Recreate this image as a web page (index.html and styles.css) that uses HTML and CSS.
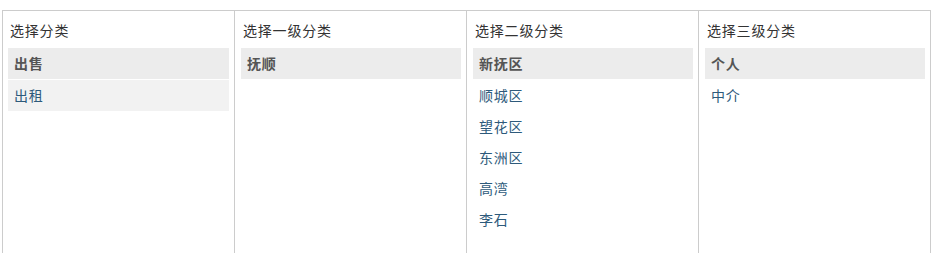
FILE: index.html
```html
<!DOCTYPE html>
<html lang="zh-CN">
<head>
<meta charset="utf-8">
<title>选择分类</title>
<link rel="stylesheet" href="styles.css">
</head>
<body>
<div class="picker">
  <div class="col">
    <div class="col-title">选择分类</div>
    <ul class="list">
      <li class="item active">出售</li>
      <li class="item shaded"><a href="#">出租</a></li>
    </ul>
  </div>
  <div class="col">
    <div class="col-title">选择一级分类</div>
    <ul class="list">
      <li class="item active">抚顺</li>
    </ul>
  </div>
  <div class="col">
    <div class="col-title">选择二级分类</div>
    <ul class="list">
      <li class="item active">新抚区</li>
      <li class="item"><a href="#">顺城区</a></li>
      <li class="item"><a href="#">望花区</a></li>
      <li class="item"><a href="#">东洲区</a></li>
      <li class="item"><a href="#">高湾</a></li>
      <li class="item"><a href="#">李石</a></li>
    </ul>
  </div>
  <div class="col">
    <div class="col-title">选择三级分类</div>
    <ul class="list">
      <li class="item active">个人</li>
      <li class="item"><a href="#">中介</a></li>
    </ul>
  </div>
</div>
</body>
</html>
```
FILE: styles.css
```css
html, body {
  margin: 0;
  padding: 0;
  background: #fff;
}
body {
  font-family: "Noto Sans CJK SC", "Liberation Sans", sans-serif;
  font-size: 14px;
  color: #333;
}
.picker {
  margin: 10px 0 0 2px;
  width: 929px;
  height: 243px;
  box-sizing: border-box;
  border: 1px solid #ccc;
  border-bottom: none;
  display: grid;
  grid-template-columns: 231px 232px 232px 232px;
  overflow: hidden;
}
.col {
  padding: 8px 5px 0 5px;
  box-sizing: border-box;
}
.col + .col {
  border-left: 1px solid #ccc;
  padding-left: 6px;
}
.col-title {
  line-height: 22px;
  height: 22px;
  padding-left: 2px;
  margin-bottom: 7px;
  color: #333;
  letter-spacing: 0.8px;
}
.list {
  list-style: none;
  margin: 0;
  padding: 0;
}
.item {
  height: 31px;
  line-height: 31px;
  padding-left: 6px;
  letter-spacing: 0.8px;
}
.item.active {
  background: #ececec;
  font-weight: bold;
  color: #555;
  margin-bottom: 1px;
}
.item.shaded {
  background: #f2f2f2;
}
.item a {
  color: #2d5a7b;
  text-decoration: none;
}
```
